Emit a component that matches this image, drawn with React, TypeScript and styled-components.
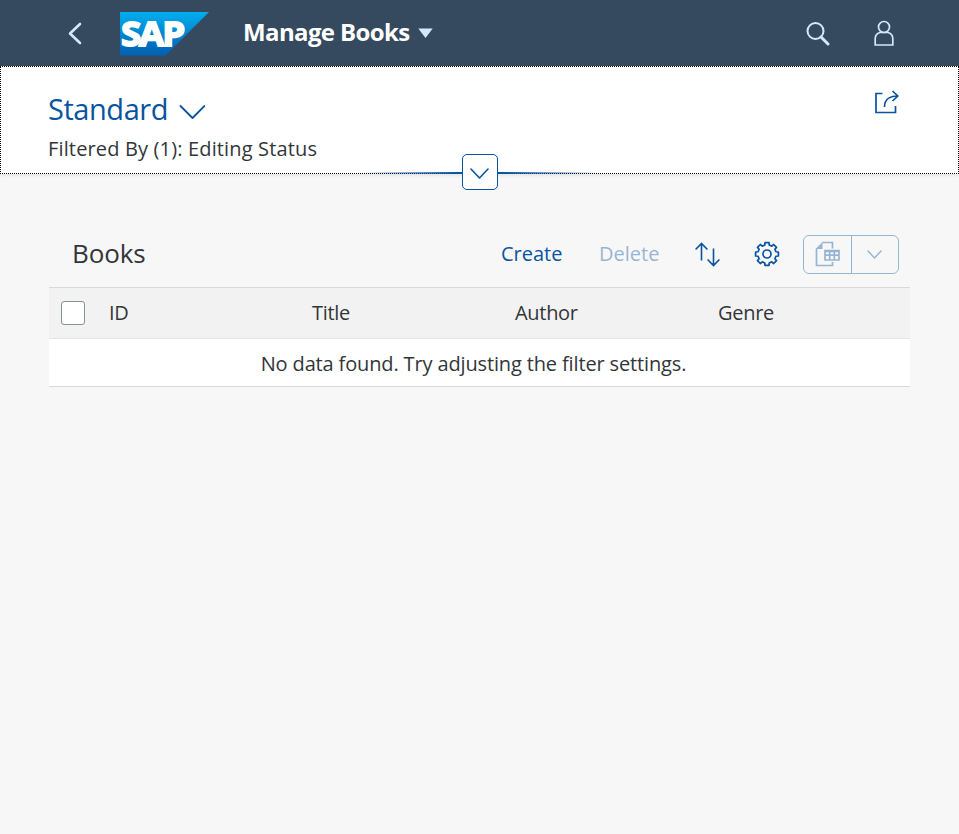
import React from "react";
import styled, { createGlobalStyle } from "styled-components";

const blue = "#0854a0";

const GlobalStyle = createGlobalStyle`
  *, *::before, *::after { box-sizing: border-box; }
  html, body { margin: 0; height: 100%; background: #f7f7f7; }
  body { font-family: "Open Sans", "Noto Sans", sans-serif; color: #32363a; overflow: hidden; }
  button { font: inherit; color: inherit; background: none; border: 0; padding: 0; margin: 0; }
  svg { display: block; flex: none; }
`;

const ShellBar = styled.header`
  display: flex;
  align-items: center;
  height: 66px;
  padding: 0 64px 0 66px;
  background: #354a5f;
  color: #d1e8ff;
`;

const BackButton = styled.button`
  width: 18px;
  margin-right: 36px;
`;

const AppTitle = styled.button`
  display: flex;
  align-items: center;
  gap: 7px;
  margin-left: 33px;
  color: #fff;
  font-size: 24px;
  line-height: 32px;
  font-weight: 700;
  white-space: nowrap;
`;

const TitleText = styled.span`
  width: 168px;
  margin-top: -2px;
  text-align: left;
  letter-spacing: -0.62px;
`;

const ShellActions = styled.div`
  display: flex;
  align-items: center;
  gap: 42px;
  margin-left: auto;
`;

const PageHeader = styled.section`
  position: relative;
  display: flex;
  justify-content: space-between;
  height: 108px;
  padding: 22px 58px 0 47px;
  background: #fff;
  border: 1px dotted #000;
  box-shadow: 0 2px 3px rgba(0, 0, 0, 0.07);
`;

const VariantButton = styled.button`
  display: flex;
  align-items: center;
  gap: 11px;
  height: 42px;
  color: ${blue};
  font-size: 29px;
  line-height: 38px;
  white-space: nowrap;
`;

const VariantName = styled.span`
  width: 120px;
  margin-top: -2px;
  text-align: left;
  letter-spacing: -0.45px;
`;

const FilterSummary = styled.div`
  font-size: 20px;
  line-height: 36px;
  white-space: nowrap;
  letter-spacing: 0.15px;
`;

const ShareButton = styled.button`
  height: 26px;
  color: ${blue};
`;

const ExpandLine = styled.div`
  position: absolute;
  left: 360px;
  bottom: -1px;
  width: 238px;
  height: 2px;
  background: linear-gradient(90deg, rgba(8, 84, 160, 0), ${blue} 40%, ${blue} 60%, rgba(8, 84, 160, 0));
`;

const ExpandButton = styled.button`
  position: absolute;
  left: 461px;
  top: 87px;
  width: 36px;
  height: 36px;
  display: grid;
  place-items: center;
  padding: 3px 1px 0 0;
  color: ${blue};
  background: #fff;
  border: 1px solid ${blue};
  border-radius: 5px;
`;

const Content = styled.main`
  padding: 47px 49px 0;
`;

const Toolbar = styled.div`
  display: flex;
  align-items: center;
  height: 66px;
  padding: 0 11px 0 23px;
`;

const TableTitle = styled.h2`
  margin: -2px auto 0 0;
  font-size: 26px;
  line-height: 36px;
  font-weight: 400;
  letter-spacing: -0.15px;
`;

const TextAction = styled.button<{ $gap: number; $width: number }>`
  width: ${(p) => p.$width}px;
  margin: -2px ${(p) => p.$gap}px 0 0;
  color: ${blue};
  font-size: 20px;
  text-align: left;
  white-space: nowrap;
  &:disabled { opacity: 0.4; }
`;

const IconAction = styled.button<{ $gap: number }>`
  margin-right: ${(p) => p.$gap}px;
  color: ${blue};
`;

const SplitButton = styled.div`
  display: flex;
  width: 96px;
  height: 39px;
  color: ${blue};
  border: 1px solid ${blue};
  border-radius: 6px;
  opacity: 0.4;
`;

const SplitPart = styled.button`
  flex: 1;
  display: grid;
  place-items: center;
  & + & { border-left: 1px solid ${blue}; }
`;

const Table = styled.div`
  border-top: 1px solid #d9d9d9;
  border-bottom: 1px solid #d9d9d9;
  width: 861px;
  font-size: 20px;
`;

const HeaderRow = styled.div`
  display: grid;
  grid-template-columns: 60px repeat(4, 203px);
  align-items: center;
  height: 51px;
  background: #f2f2f2;
  border-bottom: 1px solid #e5e5e5;
`;

const ColumnLabel = styled.span`
  padding-bottom: 2px;
  letter-spacing: -0.3px;
`;

const Checkbox = styled.span`
  width: 24px;
  height: 24px;
  margin-left: 12px;
  background: #fff;
  border: 1px solid #89919a;
  border-radius: 3px;
`;

const EmptyRow = styled.div`
  height: 47px;
  line-height: 49px;
  padding-right: 12px;
  background: #fff;
  text-align: center;
  white-space: nowrap;
  letter-spacing: -0.14px;
`;

const Chevron = ({ w, h, stroke = 1.7 }: { w: number; h: number; stroke?: number }) => (
  <svg width={w} height={h} viewBox={`0 0 ${w} ${h}`} fill="none" stroke="currentColor" strokeWidth={stroke} strokeLinecap="round" strokeLinejoin="round">
    <path d={`M1 1 L${w / 2} ${h - 1} L${w - 1} 1`} />
  </svg>
);

const LogoMark = styled.svg`
  margin-top: 2px;
  overflow: visible;
`;

const Logo = () => (
  <LogoMark width="90" height="44" viewBox="0 0 90 44">
    <defs>
      <linearGradient id="sap" x1="0" y1="0" x2="0" y2="1">
        <stop offset="0" stopColor="#00aeef" />
        <stop offset="0.3" stopColor="#0097dc" />
        <stop offset="0.75" stopColor="#0070c0" />
        <stop offset="1" stopColor="#0061b3" />
      </linearGradient>
    </defs>
    <path d="M0 0H89L45.500 43.500H0Z" fill="url(#sap)" />
    <text x="1" y="34" textLength="62" lengthAdjust="spacingAndGlyphs" fill="#fff" stroke="#fff" strokeWidth="1.800" fontFamily="Open Sans, sans-serif" fontWeight="700" fontSize="34.500" letterSpacing="-2">SAP</text>
  </LogoMark>
);

const gearPath = (() => {
  const pts: string[] = [];
  for (let i = 0; i < 8; i++) {
    for (const [off, r] of [[-14, 9.2], [-10, 11.6], [10, 11.6], [14, 9.2]]) {
      const a = ((i * 45 + off) * Math.PI) / 180;
      pts.push(`${(13 + r * Math.cos(a)).toFixed(2)} ${(13 + r * Math.sin(a)).toFixed(2)}`);
    }
  }
  return `M${pts.join("L")}Z`;
})();

export default function App() {
  return (
    <>
      <GlobalStyle />
      <ShellBar>
        <BackButton aria-label="Back">
          <svg width="18" height="24" viewBox="0 0 18 24" fill="none" stroke="currentColor" strokeWidth="2.600" strokeLinecap="round" strokeLinejoin="round">
            <path d="M14 3L4 12.500L14 22" />
          </svg>
        </BackButton>
        <Logo />
        <AppTitle>
          <TitleText>Manage Books</TitleText>
          <svg width="15" height="10" viewBox="0 0 15 10" fill="#d1e8ff"><path d="M0.300 0.500H14.700L7.500 10Z" /></svg>
        </AppTitle>
        <ShellActions>
          <svg width="26" height="26" viewBox="0 0 26 26" fill="none" stroke="currentColor" strokeWidth="2">
            <circle cx="10.500" cy="11" r="8" />
            <path d="M16 17L23 24" strokeWidth="3" strokeLinecap="round" />
          </svg>
          <svg width="22" height="26" viewBox="0 0 22 26" fill="none" stroke="currentColor" strokeWidth="1.700">
            <circle cx="11" cy="7" r="5.500" />
            <path d="M7 12.500C4 13.500 2.200 15.500 2.200 18.500V25H19.800V18.500C19.800 15.500 18 13.500 15 12.500Z" />
          </svg>
        </ShellActions>
      </ShellBar>
      <PageHeader>
        <div>
          <VariantButton>
            <VariantName>Standard</VariantName>
            <svg width="26" height="18" viewBox="0 0 26 18" fill="none" stroke="currentColor" strokeWidth="1.800" strokeLinecap="round" strokeLinejoin="round">
              <path d="M1.500 5L13.500 17L25.500 5" />
            </svg>
          </VariantButton>
          <FilterSummary>Filtered By (1): Editing Status</FilterSummary>
        </div>
        <ShareButton aria-label="Share">
          <svg width="26" height="26" viewBox="0 0 26 26" fill="none" stroke="currentColor" strokeWidth="1.700">
            <path d="M8.500 4.500H2V23.500H21.500V17" />
            <path d="M10.500 18C10.500 11 15 7 23.500 7M18.500 2L23.800 7L18.500 12" />
          </svg>
        </ShareButton>
        <ExpandLine />
        <ExpandButton aria-label="Expand header"><Chevron w={19} h={11} stroke={1.600} /></ExpandButton>
      </PageHeader>
      <Content>
        <Toolbar>
          <TableTitle>Books</TableTitle>
          <TextAction $width={62} $gap={36}>Create</TextAction>
          <TextAction $width={60} $gap={36} disabled>Delete</TextAction>
          <IconAction $gap={33} aria-label="Sort">
            <svg width="26" height="26" viewBox="0 0 26 26" fill="none" stroke="currentColor" strokeWidth="1.600">
              <path d="M6.500 19.500V2.500M0.600 8.500L6.500 2.500L12.400 8.500M18.500 7.500V24.500M12.600 18.500L18.500 24.500L24.400 18.500" />
            </svg>
          </IconAction>
          <IconAction $gap={23} aria-label="Settings">
            <svg width="26" height="26" viewBox="0 0 26 26" fill="none" stroke="currentColor" strokeWidth="1.700" strokeLinejoin="round">
              <path d={gearPath} />
              <circle cx="13" cy="13" r="4" />
            </svg>
          </IconAction>
          <SplitButton>
            <SplitPart aria-label="Export">
              <svg width="26" height="26" viewBox="0 0 26 26" fill="none" stroke="currentColor" strokeWidth="1.700">
                <path d="M2.500 8V24.500H18.500V21M8 1.500H18.500V7.500" />
                <path d="M1.500 8L8.500 1V8Z" fill="currentColor" stroke="none" />
                <path d="M11 9.500H25V19H11ZM11 14.200H25M15.700 9.500V19M20.300 9.500V19M11 10.500H25" />
              </svg>
            </SplitPart>
            <SplitPart aria-label="More export options"><Chevron w={15} h={9} stroke={1.400} /></SplitPart>
          </SplitButton>
        </Toolbar>
        <Table>
          <HeaderRow>
            <Checkbox />
            <ColumnLabel>ID</ColumnLabel>
            <ColumnLabel>Title</ColumnLabel>
            <ColumnLabel>Author</ColumnLabel>
            <ColumnLabel>Genre</ColumnLabel>
          </HeaderRow>
          <EmptyRow>No data found. Try adjusting the filter settings.</EmptyRow>
        </Table>
      </Content>
    </>
  );
}
